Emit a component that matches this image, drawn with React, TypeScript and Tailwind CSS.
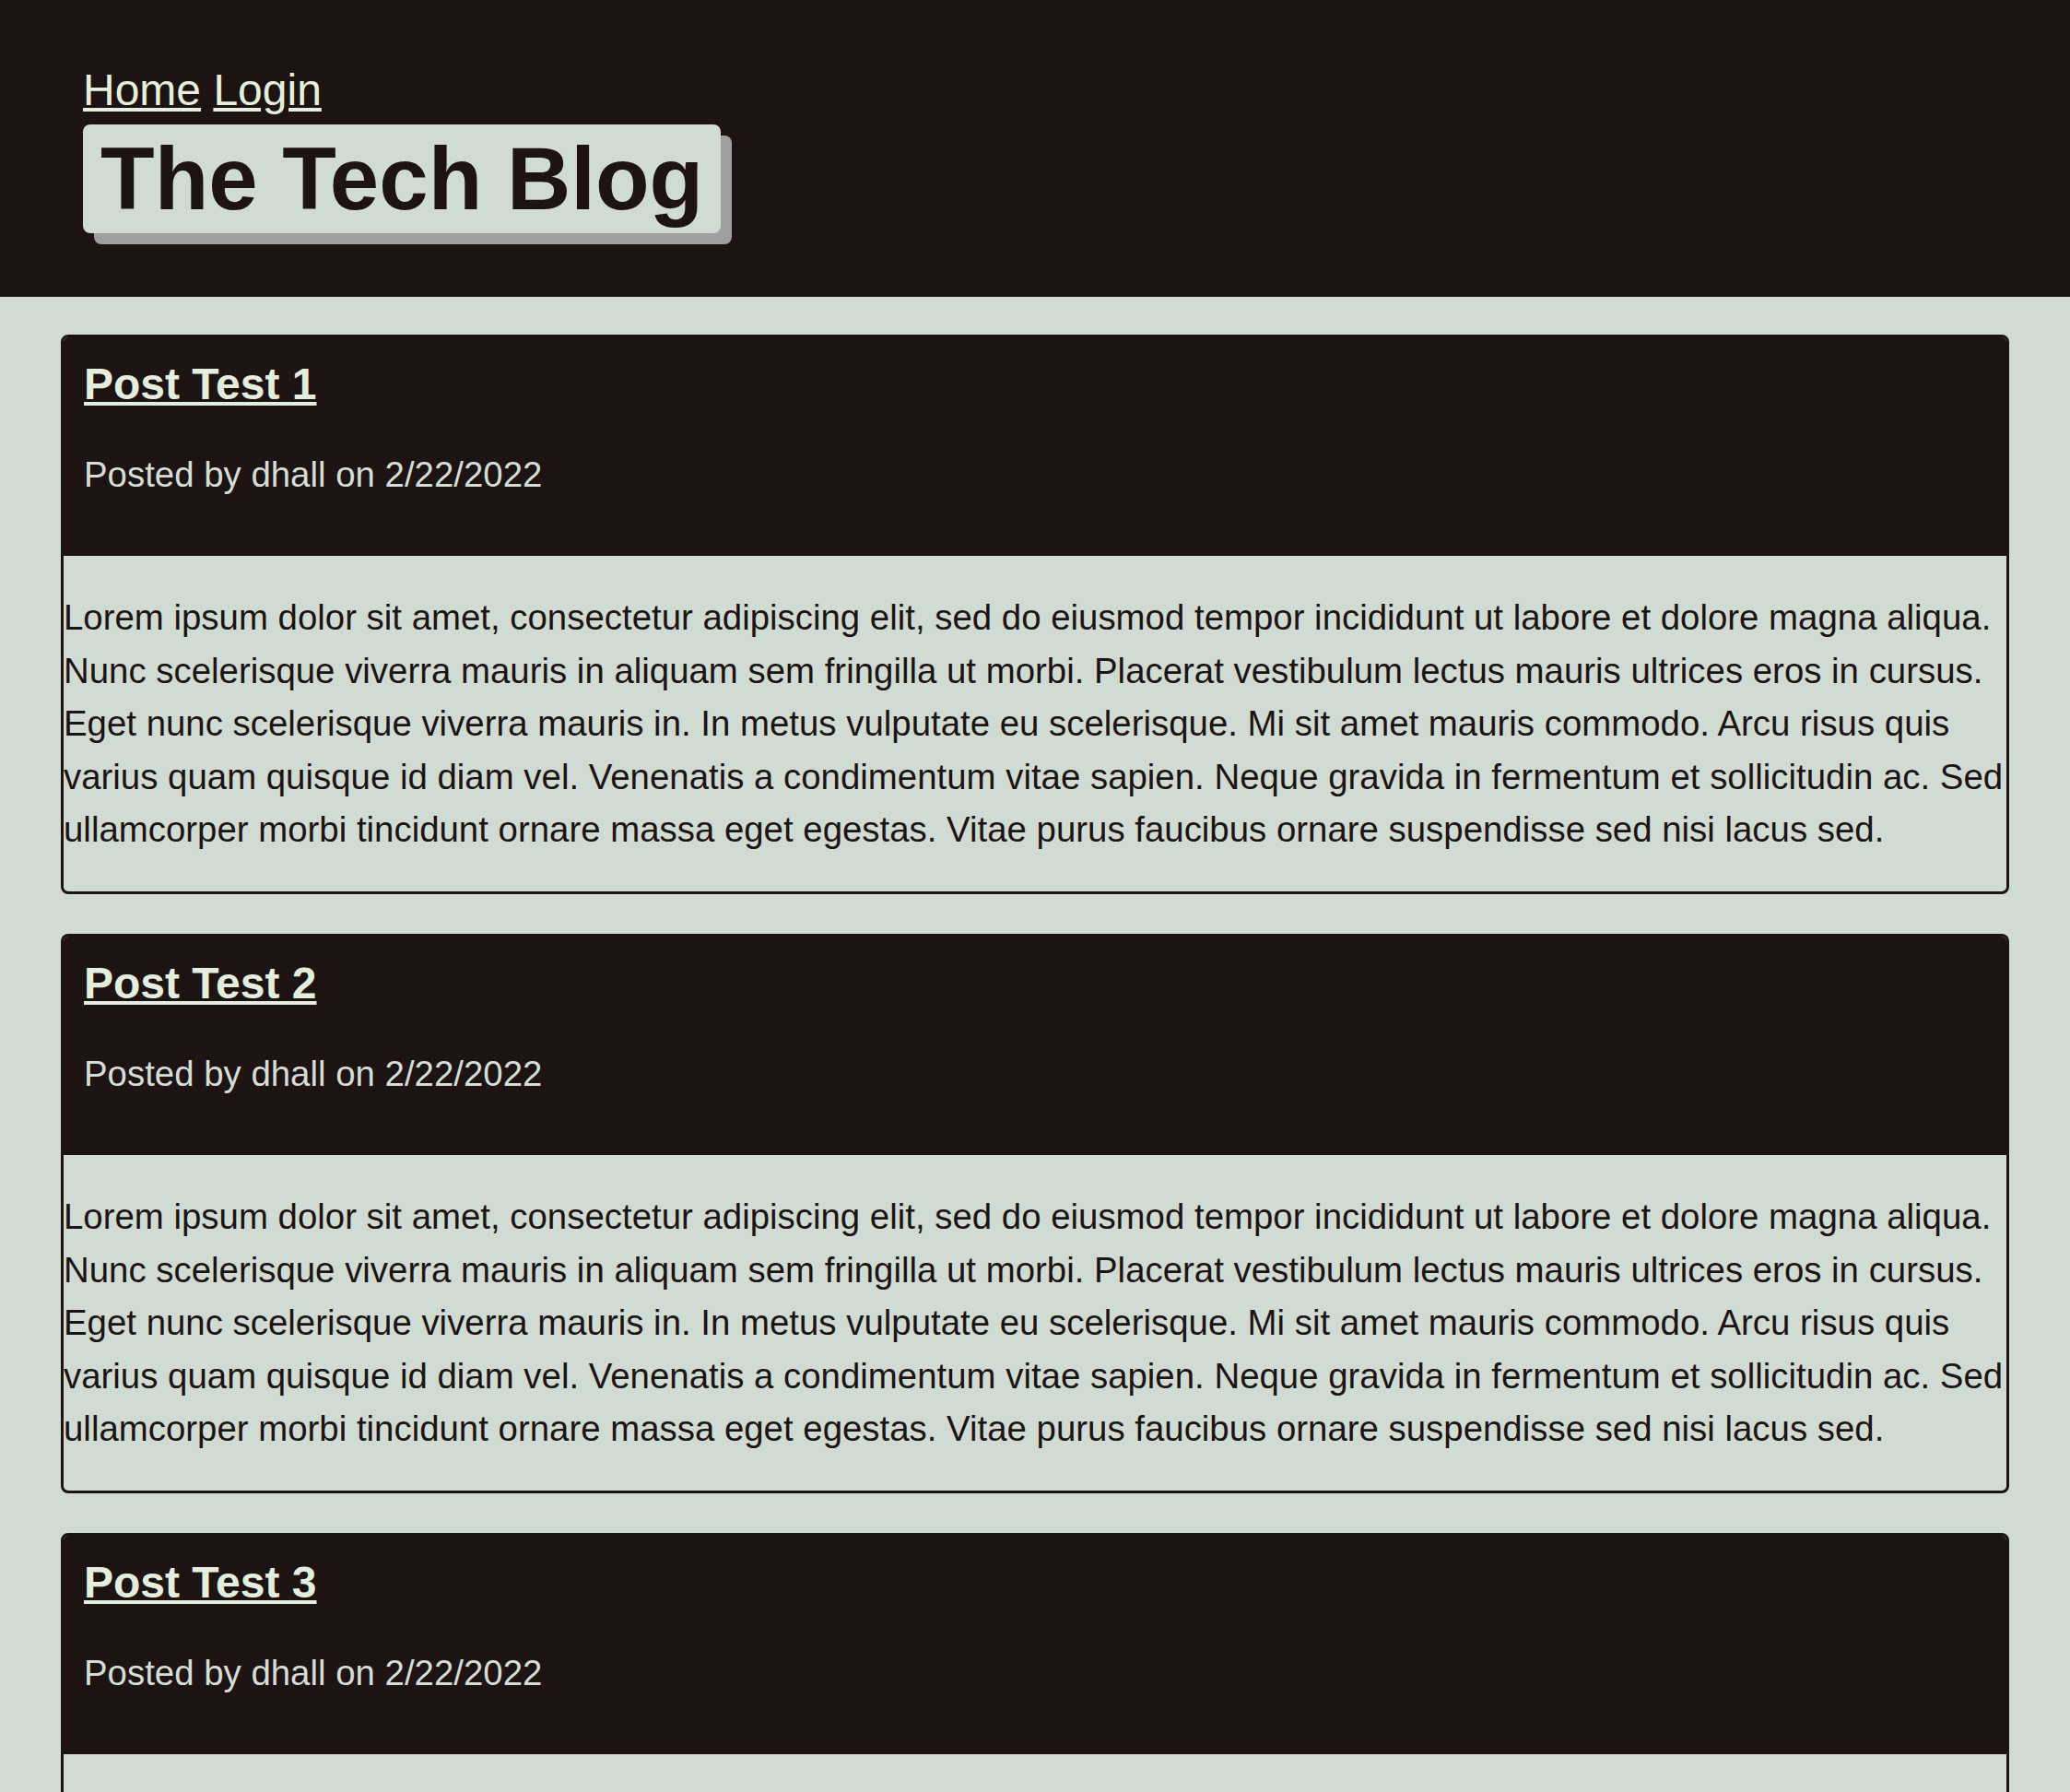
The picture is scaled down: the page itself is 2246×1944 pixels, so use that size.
const POSTS = [
  { id: 1, title: "Post Test 1", author: "dhall", date: "2/22/2022" },
  { id: 2, title: "Post Test 2", author: "dhall", date: "2/22/2022" },
  { id: 3, title: "Post Test 3", author: "dhall", date: "2/22/2022" },
];

const LOREM =
  "Lorem ipsum dolor sit amet, consectetur adipiscing elit, sed do eiusmod tempor incididunt ut labore et dolore magna aliqua. Nunc scelerisque viverra mauris in aliquam sem fringilla ut morbi. Placerat vestibulum lectus mauris ultrices eros in cursus. Eget nunc scelerisque viverra mauris in. In metus vulputate eu scelerisque. Mi sit amet mauris commodo. Arcu risus quis varius quam quisque id diam vel. Venenatis a condimentum vitae sapien. Neque gravida in fermentum et sollicitudin ac. Sed ullamcorper morbi tincidunt ornare massa eget egestas. Vitae purus faucibus ornare suspendisse sed nisi lacus sed.";

export default function App() {
  return (
    <div className="min-h-screen bg-[#d0dbd3] font-['Liberation_Sans',Arial,sans-serif]">
      {/* Header */}
      <header className="bg-[#1d1312] pl-[90px] pt-[70px] pb-[69px]">
        <nav className="text-[48px] leading-[56px] text-[#e5efdc]">
          <a href="#" className="underline">Home</a>{" "}
          <a href="#" className="underline">Login</a>
        </nav>
        <h1 className="mt-[9px] inline-block rounded-[8px] bg-[#d0dbd3] px-[19px] py-[4px] text-[96px] font-bold leading-[110px] text-[#1d1312] shadow-[12px_12px_0_#a0a0a0]">
          The Tech Blog
        </h1>
      </header>

      {/* Posts */}
      <main className="flex flex-col gap-[43px] px-[66px] pt-[41px] pb-[40px]">
        {POSTS.map((post) => (
          <article key={post.id} className="overflow-hidden rounded-[8px] border-[3px] border-[#1d1312]">
            <div className="bg-[#1d1312] pl-[22px] pt-[23px] pb-[66px]">
              <h2 className="text-[48px] font-bold leading-[55px] text-[#e3eedf]">
                <a href="#" className="underline">{post.title}</a>
              </h2>
              <p className="mt-[49px] text-[38.4px] leading-[44px] text-[#d4ded6]">
                Posted by {post.author} on {post.date}
              </p>
            </div>
            <div className="pt-[38px] pb-[38px]">
              <p className="text-[38.4px] leading-[57.6px] text-[#1d1312]">{LOREM}</p>
            </div>
          </article>
        ))}
      </main>
    </div>
  );
}
